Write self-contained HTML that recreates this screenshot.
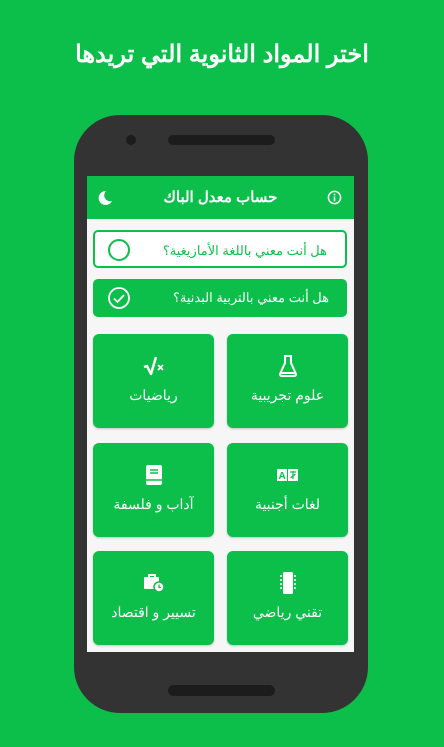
<!DOCTYPE html>
<html><head><meta charset="utf-8"><style>
*{margin:0;padding:0;box-sizing:border-box}
body{width:444px;height:747px;background:#0cbf4a;position:relative;overflow:hidden;font-family:"Liberation Sans","Noto Sans CJK SC",sans-serif}
.t{position:absolute;top:40px;left:0;width:444px;text-align:center;color:#fff;font-size:24px;font-weight:bold;direction:rtl}
.ph{position:absolute;left:74px;top:115px;width:294px;height:598px;background:#333;border-radius:46px}
.cam{position:absolute;left:126px;top:135px;width:10px;height:10px;border-radius:50%;background:#1c1c1c}
.spk{position:absolute;left:168px;top:135px;width:107px;height:10px;border-radius:5px;background:#1c1c1c}
.bot{position:absolute;left:168px;top:685px;width:107px;height:11px;border-radius:6px;background:#1c1c1c}
.sc{position:absolute;left:87px;top:176px;width:267px;height:476px;background:#f6f6f6}
.hd{position:absolute;left:0;top:0;width:267px;height:43px;background:#0cbf4a;color:#fff;font-size:15px;font-weight:bold;text-align:center;line-height:43px;direction:rtl}
.op{position:absolute;left:6px;width:254px;height:38px;border-radius:5px;font-size:13px;direction:rtl;line-height:38px;padding-right:18px}
.card{position:absolute;width:121px;height:94px;background:#0cbf4a;border-radius:6px;color:#fff;text-align:center;font-size:14px;direction:rtl;box-shadow:0 1px 2px rgba(0,0,0,.2)}
.card .ic{height:24px;margin-top:20px;display:flex;justify-content:center;align-items:center;direction:ltr}
.card .lb{margin-top:9px}
</style></head><body>
<div class="t">اختر المواد الثانوية التي تريدها</div>
<div class="ph"></div><div class="cam"></div><div class="spk"></div><div class="bot"></div>
<div class="sc">
<div class="hd">حساب معدل الباك
<svg style="position:absolute;left:10px;top:14px" width="16" height="16" viewBox="0 0 16 16"><path d="M9 1A7 7 0 1 0 15 11A6 6 0 0 1 9 1Z" fill="#fff"/></svg>
<svg style="position:absolute;right:12px;top:14px" width="15" height="15" viewBox="0 0 16 16"><circle cx="8" cy="8" r="6.5" fill="none" stroke="#fff" stroke-width="1.6"/><rect x="7.2" y="7" width="1.6" height="5" fill="#fff"/><circle cx="8" cy="4.8" r="1" fill="#fff"/></svg>
</div>
<div class="op" style="top:54px;background:#fff;border:2px solid #0cbf4a;color:#0cbf4a">هل أنت معني باللغة الأمازيغية؟
<svg style="position:absolute;left:13px;top:7px" width="22" height="22"><circle cx="11" cy="11" r="10" fill="none" stroke="#0cbf4a" stroke-width="2"/></svg></div>
<div class="op" style="top:103px;background:#0cbf4a;color:#fff">هل أنت معني بالتربية البدنية؟
<svg style="position:absolute;left:15px;top:8px" width="22" height="22"><circle cx="11" cy="11" r="10" fill="none" stroke="#fff" stroke-width="1.8"/><path d="M6 11.5l3.5 3.5 6.5-7" fill="none" stroke="#fff" stroke-width="1.8"/></svg></div>
<div class="card" style="left:6px;top:158px"><div class="ic"><svg width="22" height="20" viewBox="0 0 22 20"><path d="M1 11l3-1 4 8 5-17" fill="none" stroke="#fff" stroke-width="2.5" stroke-linejoin="round"/><path d="M15 9l5 5M20 9l-5 5" stroke="#fff" stroke-width="1.8"/></svg></div><div class="lb">رياضيات</div></div>
<div class="card" style="left:140px;top:158px"><div class="ic"><svg width="18" height="22" viewBox="0 0 18 22"><path d="M5 1h8M6 1v7L1 19q0 2 2 2h12q2 0 2-2L12 8V1" fill="none" stroke="#fff" stroke-width="2"/><path d="M3 17h12l1 2H2z" fill="#fff"/></svg></div><div class="lb">علوم تجريبية</div></div>
<div class="card" style="left:6px;top:267px"><div class="ic"><svg width="18" height="22" viewBox="0 0 18 22"><rect x="1" y="1" width="16" height="20" rx="2" fill="#fff"/><path d="M5 6h8M5 9h8M1 16h16" stroke="#0cbf4a" stroke-width="1.5"/></svg></div><div class="lb">آداب و فلسفة</div></div>
<div class="card" style="left:140px;top:267px"><div class="ic"><svg width="22" height="12"><rect x="0" y="0" width="10" height="12" fill="#fff"/><rect x="11" y="0" width="10" height="12" fill="#fff"/><text x="1.5" y="10" font-size="10" font-weight="bold" fill="#0cbf4a" font-family="Liberation Sans">A</text><path d="M13 3h6M16 2v8M13.5 9l5-4" stroke="#0cbf4a" stroke-width="1.2" fill="none"/></svg></div><div class="lb">لغات أجنبية</div></div>
<div class="card" style="left:6px;top:375px"><div class="ic"><svg width="22" height="20" viewBox="0 0 22 20"><path d="M6 4V2h6v2" fill="none" stroke="#fff" stroke-width="2"/><rect x="1" y="4" width="15" height="12" rx="1" fill="#fff"/><circle cx="16" cy="14" r="5" fill="#fff" stroke="#0cbf4a" stroke-width="1.5"/><path d="M16 11.5v3h2" stroke="#0cbf4a" stroke-width="1.3" fill="none"/></svg></div><div class="lb">تسيير و اقتصاد</div></div>
<div class="card" style="left:140px;top:375px"><div class="ic"><svg width="18" height="24" viewBox="0 0 18 24"><rect x="4" y="1" width="10" height="22" rx="1.5" fill="#fff"/><path d="M1 5h2M1 9h2M1 13h2M1 17h2M15 5h2M15 9h2M15 13h2M15 17h2" stroke="#fff" stroke-width="1.5"/></svg></div><div class="lb">تقني رياضي</div></div>
</div>
</body></html>
